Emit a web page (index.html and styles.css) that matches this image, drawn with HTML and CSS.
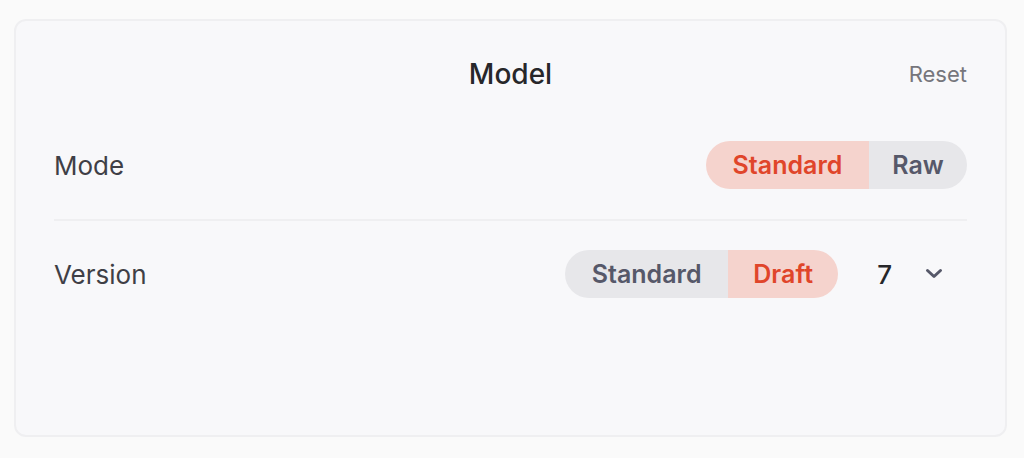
FILE: index.html
```html
<!DOCTYPE html>
<html lang="en">
<head>
    <meta charset="UTF-8">
    <meta name="viewport" content="width=device-width, initial-scale=1.0">
    <title>Model</title>
    <link rel="stylesheet" href="styles.css">
</head>
<body>
    <div class="panel">
        <div class="panel-header">
            <h2>Model</h2>
            <button class="reset">Reset</button>
        </div>

        <div class="row">
            <span class="label">Mode</span>
            <div class="toggle">
                <button class="active seg-standard">Standard</button>
                <button class="seg-raw">Raw</button>
            </div>
        </div>

        <div class="row">
            <span class="label">Version</span>
            <div class="controls">
                <div class="toggle">
                    <button class="seg-standard">Standard</button>
                    <button class="active seg-draft">Draft</button>
                </div>
                <div class="select">
                    <span class="value">7</span>
                    <svg width="20" height="12" viewBox="0 0 20 12">
                        <path d="M3.5 2.5 L10 8.5 L16.5 2.5" fill="none" stroke="#565869" stroke-width="3" stroke-linecap="round" stroke-linejoin="round"/>
                    </svg>
                </div>
            </div>
        </div>
    </div>
</body>
</html>
```

FILE: styles.css
```css
body {
    font-family: Inter, "Noto Sans", sans-serif;
    background-color: #fafafa;
    margin: 0;
    padding: 19px 17px 21px 14px;
    box-sizing: border-box;
    height: 458px;
}

.panel {
    background-color: #f8f8fa;
    border: 2px solid #efeff1;
    border-radius: 12px;
    padding: 0 38px;
    height: 100%;
    box-sizing: border-box;
}

.panel-header {
    position: relative;
    height: 90px;
    padding-top: 33px;
    box-sizing: border-box;
    display: flex;
    justify-content: center;
}

.panel-header h2 {
    margin: 0;
    font-size: 28px;
    line-height: 40px;
    font-weight: 500;
    color: #27272a;
}

.reset {
    position: absolute;
    right: 0;
    top: 33px;
    height: 40px;
    background: none;
    border: none;
    padding: 0;
    font-family: inherit;
    font-size: 22px;
    color: #76767c;
}

.row {
    display: flex;
    justify-content: space-between;
    align-items: center;
    height: 108px;
}

.row + .row {
    border-top: 2px solid #efeff1;
    height: 106px;
}

.label {
    font-size: 26px;
    color: #3f3f46;
}

.controls {
    display: flex;
    align-items: center;
}

.toggle {
    display: flex;
    border-radius: 24px;
    overflow: hidden;
    height: 48px;
}

.toggle button {
    border: none;
    background-color: #e7e7ea;
    color: #565869;
    font-family: inherit;
    font-size: 25px;
    font-weight: 600;
    padding: 0;
}

.toggle .seg-standard {
    width: 163px;
}

.toggle .seg-raw {
    width: 98px;
}

.toggle .seg-draft {
    width: 110px;
}

.toggle button.active {
    background-color: #f5d3cd;
    color: #e0452a;
}

.select {
    display: flex;
    align-items: center;
    margin-left: 39px;
    margin-right: 23px;
}

.select .value {
    font-size: 26px;
    font-weight: 500;
    color: #27272a;
    margin-right: 32px;
}
```
